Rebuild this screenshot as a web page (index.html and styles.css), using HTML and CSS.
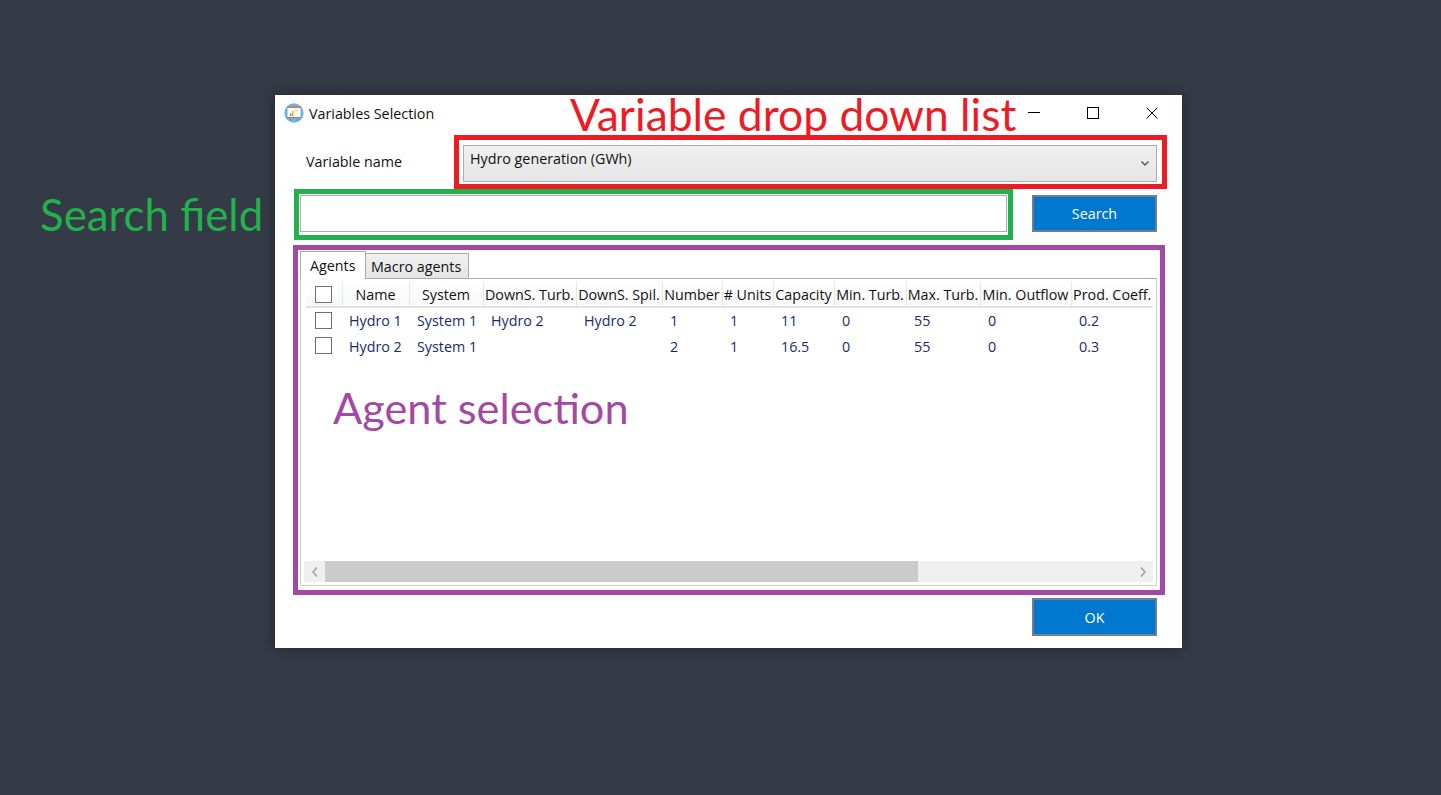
FILE: index.html
```html
<!DOCTYPE html>
<html lang="en">
<head>
    <meta charset="UTF-8">
    <meta name="viewport" content="width=device-width, initial-scale=1.0">
    <title>Variables Selection</title>
    <link rel="stylesheet" href="styles.css">
</head>
<body>

    <div class="note note-search">Search field</div>

    <div class="window">
        <div class="titlebar">
            <svg class="app-icon" width="20" height="20" viewBox="0 0 20 20">
                <circle cx="10" cy="10" r="9.7" fill="#63b8e4"/>
                <rect x="3.5" y="4.5" width="13" height="9.5" fill="#fbfaf5"/>
                <rect x="3" y="3.5" width="14" height="1.4" fill="#d9695f"/>
                <rect x="6" y="10.5" width="1.5" height="2.5" fill="#4fae62"/>
                <rect x="8" y="8" width="1.5" height="5" fill="#e6ab2c"/>
                <rect x="10" y="6.5" width="4" height="2" fill="#ecdfc8"/>
                <path d="M3 14.5h14M7 14.5l-1.5 3M13 14.5l1.5 3" stroke="#d9695f" stroke-width="1.1" fill="none"/>
            </svg>
            <span class="title-text">Variables Selection</span>
            <div class="note note-variable">Variable drop down list</div>
            <div class="win-buttons">
                <svg width="12" height="12" viewBox="0 0 12 12"><path d="M0 5.5h12" stroke="#000" fill="none"/></svg>
                <svg width="12" height="12" viewBox="0 0 12 12"><rect x="0.5" y="0.5" width="11" height="11" stroke="#000" fill="none"/></svg>
                <svg width="12" height="12" viewBox="0 0 12 12"><path d="M0.5 0.5l11 11M11.5 0.5l-11 11" stroke="#000" fill="none"/></svg>
            </div>
        </div>

        <div class="variable-row">
            <label class="variable-label">Variable name</label>
            <div class="box-red">
                <div class="combo">
                    <span>Hydro generation (GWh)</span>
                    <svg class="combo-arrow" width="8" height="5" viewBox="0 0 8 5"><path d="M0.5 0.5l3.5 3.5 3.5-3.5" stroke="#555" stroke-width="1.4" fill="none"/></svg>
                </div>
            </div>
        </div>

        <div class="search-row">
            <div class="box-green">
                <input class="search-input" type="text">
            </div>
            <button class="btn btn-search">Search</button>
        </div>

        <div class="box-purple">
            <div class="note note-agent">Agent selection</div>
            <div class="tabs">
                <div class="tab tab-active">Agents</div>
                <div class="tab">Macro agents</div>
            </div>
            <div class="tab-panel">
                <div class="grid-area">
                    <table class="agents">
                        <colgroup>
                            <col class="c1"><col class="c2"><col class="c3"><col class="c4"><col class="c5"><col class="c6">
                            <col class="c7"><col class="c8"><col class="c9"><col class="c10"><col class="c11"><col class="c12">
                        </colgroup>
                        <thead>
                            <tr>
                                <th><span class="check"></span></th>
                                <th>Name</th>
                                <th>System</th>
                                <th>DownS. Turb.</th>
                                <th>DownS. Spil.</th>
                                <th>Number</th>
                                <th># Units</th>
                                <th>Capacity</th>
                                <th>Min. Turb.</th>
                                <th>Max. Turb.</th>
                                <th>Min. Outflow</th>
                                <th>Prod. Coeff.</th>
                            </tr>
                        </thead>
                        <tbody>
                            <tr>
                                <td class="check-cell"><span class="check"></span></td>
                                <td class="first">Hydro 1</td>
                                <td>System 1</td>
                                <td>Hydro 2</td>
                                <td>Hydro 2</td>
                                <td>1</td>
                                <td>1</td>
                                <td>11</td>
                                <td>0</td>
                                <td>55</td>
                                <td>0</td>
                                <td>0.2</td>
                            </tr>
                            <tr>
                                <td class="check-cell"><span class="check"></span></td>
                                <td class="first">Hydro 2</td>
                                <td>System 1</td>
                                <td></td>
                                <td></td>
                                <td>2</td>
                                <td>1</td>
                                <td>16.5</td>
                                <td>0</td>
                                <td>55</td>
                                <td>0</td>
                                <td>0.3</td>
                            </tr>
                        </tbody>
                    </table>
                </div>
                <div class="scrollbar">
                    <div class="scroll-btn">
                        <svg width="6" height="10" viewBox="0 0 6 10"><path d="M5 0.5l-4 4.5 4 4.5" stroke="#a0a0a0" stroke-width="1.5" fill="none"/></svg>
                    </div>
                    <div class="scroll-thumb"></div>
                    <div class="scroll-rest"></div>
                    <div class="scroll-btn">
                        <svg width="6" height="10" viewBox="0 0 6 10"><path d="M1 0.5l4 4.5-4 4.5" stroke="#a0a0a0" stroke-width="1.5" fill="none"/></svg>
                    </div>
                </div>
            </div>
        </div>

        <div class="ok-row">
            <button class="btn btn-ok">OK</button>
        </div>
    </div>

</body>
</html>
```

FILE: styles.css
```css
body {
    margin: 0;
    padding: 95px 0 0 275px;
    height: 795px;
    box-sizing: border-box;
    overflow: hidden;
    background-color: #343a46;
    font-family: "Open Sans", Arial, sans-serif;
    font-size: 14.3px;
    color: #111;
}
.window {
    position: relative;
    width: 907px;
    height: 553px;
    background: #fff;
    box-shadow: 0 0 12px rgba(0, 0, 0, 0.35);
}
.titlebar {
    display: flex;
    align-items: center;
    height: 40px;
    padding: 0 24px 4px 9px;
    box-sizing: border-box;
}
.app-icon {
    margin-right: 5px;
}
.title-text {
    flex: 1;
}
.win-buttons {
    display: flex;
    gap: 47px;
}
.note {
    position: absolute;
    font-family: Lato, sans-serif;
    white-space: nowrap;
    line-height: 1;
}
.note-variable {
    left: 295px;
    top: -3px;
    font-size: 44.4px;
    color: #ed1c24;
}
.note-search {
    left: 40px;
    top: 193px;
    font-size: 43.8px;
    color: #22b14c;
}
.note-agent {
    left: 35px;
    top: 136px;
    font-size: 43.3px;
    color: #a349a4;
}
.variable-row {
    display: flex;
    align-items: center;
    height: 54px;
    padding-left: 31px;
}
.variable-label {
    width: 148px;
    padding-bottom: 1px;
}
.box-red {
    width: 713px;
    height: 54px;
    box-sizing: border-box;
    border: 5px solid #ed1c24;
    padding: 5px 5px 1px 4px;
}
.combo {
    display: flex;
    justify-content: space-between;
    align-items: center;
    height: 37px;
    box-sizing: border-box;
    padding: 0 7px 11px 6px;
    border: 1px solid #acacac;
    background: linear-gradient(#f0f0f0, #e5e5e5);
}
.combo-arrow {
    margin-top: 11px;
}
.search-row {
    display: flex;
    height: 51px;
    padding-left: 19px;
}
.box-green {
    width: 719px;
    height: 51px;
    box-sizing: border-box;
    border: 5px solid #22b14c;
    padding: 1px;
}
.search-input {
    display: block;
    width: 100%;
    height: 37px;
    box-sizing: border-box;
    border: 1px solid #acacac;
    background: #fff;
    padding: 0;
}
.btn {
    width: 125px;
    height: 37px;
    box-sizing: border-box;
    border: 2px solid #6f7f8f;
    background: #0078cf;
    color: #fff;
    font-family: inherit;
    font-size: 14.3px;
    padding: 0;
}
.btn-search {
    margin: 6px 0 0 19px;
}
.box-purple {
    position: relative;
    width: 872px;
    height: 350px;
    box-sizing: border-box;
    margin: 5px 0 0 18px;
    border: 5px solid #a349a4;
    padding: 1px 3px 4px 2px;
    display: flex;
    flex-direction: column;
}
.tabs {
    display: flex;
    align-items: flex-end;
    height: 27px;
    flex-shrink: 0;
    position: relative;
    z-index: 1;
}
.tab {
    height: 25px;
    box-sizing: border-box;
    padding: 3px 7px 0 5px;
    border: 1px solid #acacac;
    border-bottom: 0;
    border-left: 0;
    background: linear-gradient(#f0f0f0, #e5e5e5);
}
.tab-active {
    width: 66px;
    height: 28px;
    margin-bottom: -1px;
    padding: 4px 0 0 9px;
    background: #fff;
    border-left: 1px solid #acacac;
}
.tab-panel {
    flex: 1;
    display: flex;
    flex-direction: column;
    box-sizing: border-box;
    padding: 3px;
    border: 1px solid #d0d0d0;
    border-top-color: #acacac;
}
.grid-area {
    flex: 1;
    padding-left: 2px;
}
.agents {
    table-layout: fixed;
    width: 847px;
    border-collapse: collapse;
}
.c1 { width: 36px; }
.c2 { width: 67px; }
.c3 { width: 74px; }
.c4 { width: 93px; }
.c5 { width: 86px; }
.c6 { width: 60px; }
.c7 { width: 51px; }
.c8 { width: 61px; }
.c9 { width: 72px; }
.c10 { width: 74px; }
.c11 { width: 91px; }
.c12 { width: 82px; }
.agents th {
    height: 25px;
    padding: 0;
    box-sizing: border-box;
    font-weight: normal;
    text-align: center;
    white-space: nowrap;
    overflow: hidden;
    border-right: 1px solid #e6e6e6;
    border-bottom: 2px solid #e2e2e2;
    background: linear-gradient(#fff, #f7f8f9);
}
.agents th:last-child {
    border-right: 0;
}
.agents td {
    height: 26px;
    padding: 0 0 0 8px;
    box-sizing: border-box;
    color: #1a2a6c;
    white-space: nowrap;
}
.agents td.first {
    padding-left: 7px;
}
.agents td.check-cell {
    padding: 4px 0 0;
    vertical-align: top;
}
.check {
    display: block;
    width: 17px;
    height: 17px;
    box-sizing: border-box;
    margin-left: 9px;
    border: 1px solid #707070;
    background: #fff;
}
.scrollbar {
    display: flex;
    height: 21px;
    flex-shrink: 0;
    background: #efefef;
}
.scroll-btn {
    display: flex;
    align-items: center;
    justify-content: center;
    width: 21px;
}
.scroll-thumb {
    width: 593px;
    background: #cbcbcb;
}
.scroll-rest {
    flex: 1;
}
.ok-row {
    display: flex;
    justify-content: flex-end;
    padding: 3px 25px 0 0;
}
.btn-ok {
    height: 38px;
}
```
